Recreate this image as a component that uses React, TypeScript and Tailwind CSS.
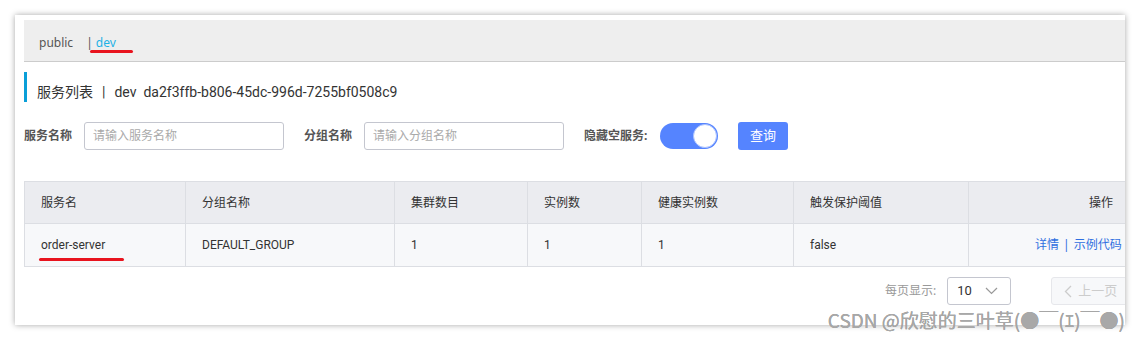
import React from 'react';

const cjk = '"Noto Sans", "Noto Sans CJK SC", sans-serif';
const rob = 'Roboto, "Noto Sans CJK SC", sans-serif';

const columns = [
  { title: '服务名', w: 161 },
  { title: '分组名称', w: 209 },
  { title: '集群数目', w: 133 },
  { title: '实例数', w: 114 },
  { title: '健康实例数', w: 152 },
  { title: '触发保护阈值', w: 175 },
];

const row = ['order-server', 'DEFAULT_GROUP', '1', '1', '1', 'false'];

function ChevronDown() {
  return (
    <svg width="13" height="8" viewBox="0 0 13 8" fill="none">
      <path d="M1 1l5.5 5.5L12 1" stroke="#999" strokeWidth="1.2" />
    </svg>
  );
}

function ChevronLeft() {
  return (
    <svg width="8" height="13" viewBox="0 0 8 13" fill="none">
      <path d="M7 1L1.5 6.5 7 12" stroke="#ccc" strokeWidth="1.3" />
    </svg>
  );
}

export default function App() {
  return (
    <div className="relative h-[340px] w-[1140px] bg-white pt-[15px] pl-[15px]" style={{ fontFamily: cjk }}>
      <div className="h-[310px] w-[1110px] overflow-hidden bg-white pt-[5px] pl-[9px] shadow-[0_0_6px_rgba(0,0,0,0.35)]">
        {/* namespace bar */}
        <div className="flex h-[42px] items-center border-b border-[#cccccc] bg-[#eeeeee] pl-[15px] pt-[4px] text-[12px]">
          <span className="text-[#555]">public</span>
          <span className="ml-[13px] text-[#555]">|</span>
          <span className="relative ml-[3px] text-[#1fb2e6]">
            dev
            <span className="absolute left-[-6px] top-[16px] h-[3px] w-[43px] rounded-full bg-[#e8141e]" />
          </span>
        </div>

        {/* title */}
        <div className="mt-[10px] flex h-[30px] items-center border-l-[3px] border-[#0a9fd8] pl-[10px] pt-[10px] text-[14px] text-[#333]" style={{ fontFamily: rob }}>
          <span>服务列表</span>
          <span className="mx-[9px]">|</span>
          <span>dev</span>
          <span className="ml-[7px]">da2f3ffb-b806-45dc-996d-7255bf0508c9</span>
        </div>

        {/* filter */}
        <div className="mt-[20px] flex h-[28px] items-center text-[12px]">
          <span className="w-[60px] font-bold text-[#555]">服务名称</span>
          <div className="flex h-[28px] w-[200px] items-center rounded-[3px] border border-[#c4c6cf] pl-[8px] text-[#aaa]">
            请输入服务名称
          </div>
          <span className="ml-[20px] w-[60px] font-bold text-[#555]">分组名称</span>
          <div className="flex h-[28px] w-[200px] items-center rounded-[3px] border border-[#c4c6cf] pl-[8px] text-[#aaa]">
            请输入分组名称
          </div>
          <span className="ml-[20px] w-[66px] font-bold text-[#555]">隐藏空服务:</span>
          <div className="ml-[10px] flex h-[26px] w-[58px] items-center justify-end rounded-full bg-[#5584ff] pr-[1px]">
            <div className="h-[24px] w-[24px] rounded-full border border-[#a9c1ff] bg-white" />
          </div>
          <div className="ml-[20px] flex h-[28px] w-[50px] items-center justify-center rounded-[3px] bg-[#5584ff] text-[13px] text-white">
            查询
          </div>
        </div>

        {/* table */}
        <table className="mt-[31px] w-[1105px] table-fixed border-collapse text-[12px] text-[#333]" style={{ fontFamily: rob }}>
          <colgroup>
            {columns.map((c) => (
              <col key={c.title} style={{ width: c.w }} />
            ))}
            <col style={{ width: 161 }} />
          </colgroup>
          <thead>
            <tr className="h-[42px] bg-[#ebecf0]">
              {columns.map((c) => (
                <th key={c.title} className="border border-[#dcdee3] pl-[16px] text-left font-normal" style={{ fontFamily: cjk }}>
                  {c.title}
                </th>
              ))}
              <th className="border border-[#dcdee3] pr-[16px] text-right font-normal" style={{ fontFamily: cjk }}>
                操作
              </th>
            </tr>
          </thead>
          <tbody>
            <tr className="h-[43px] bg-[#f7f8fa]">
              {row.map((v, i) => (
                <td key={i} className="border border-[#dcdee3] pl-[16px]">
                  {i === 0 ? (
                    <span className="relative">
                      {v}
                      <span className="absolute left-[-2px] top-[20px] h-[3px] w-[85px] rounded-full bg-[#e8141e]" />
                    </span>
                  ) : (
                    v
                  )}
                </td>
              ))}
              <td className="whitespace-nowrap border border-[#dcdee3] pl-[66px] text-[12px] text-[#2f6fe0]" style={{ fontFamily: cjk }}>
                详情<span className="mx-[4px]">|</span>示例代码
              </td>
            </tr>
          </tbody>
        </table>

        {/* pagination */}
        <div className="mt-[10px] flex h-[28px] w-max items-center text-[12px]">
          <span className="ml-[861px] shrink-0 whitespace-nowrap text-[#999]">每页显示:</span>
          <div className="ml-[11px] flex h-[28px] w-[64px] shrink-0 items-center justify-between rounded-[3px] border border-[#c4c6cf] pl-[9px] pr-[12px] text-[#333]" style={{ fontFamily: rob }}>
            <span className="text-[13px]">10</span>
            <ChevronDown />
          </div>
          <div className="ml-[40px] flex h-[28px] w-[90px] shrink-0 items-center gap-[6px] rounded-[3px] border border-[#e6e7eb] bg-[#f7f8fa] pl-[12px] text-[13px] text-[#ccc]">
            <ChevronLeft />
            <span>上一页</span>
          </div>
        </div>
      </div>

      {/* watermark */}
      <div
        className="absolute right-[15px] top-[306px] whitespace-nowrap text-[19px] font-normal text-[#a8a8a8]"
        style={{ fontFamily: '"Noto Sans CJK SC", sans-serif', textShadow: '0 0 0.5px #888' }}
      >
        CSDN @欣慰的三叶草(●￣(ｴ)￣●)
      </div>
    </div>
  );
}
